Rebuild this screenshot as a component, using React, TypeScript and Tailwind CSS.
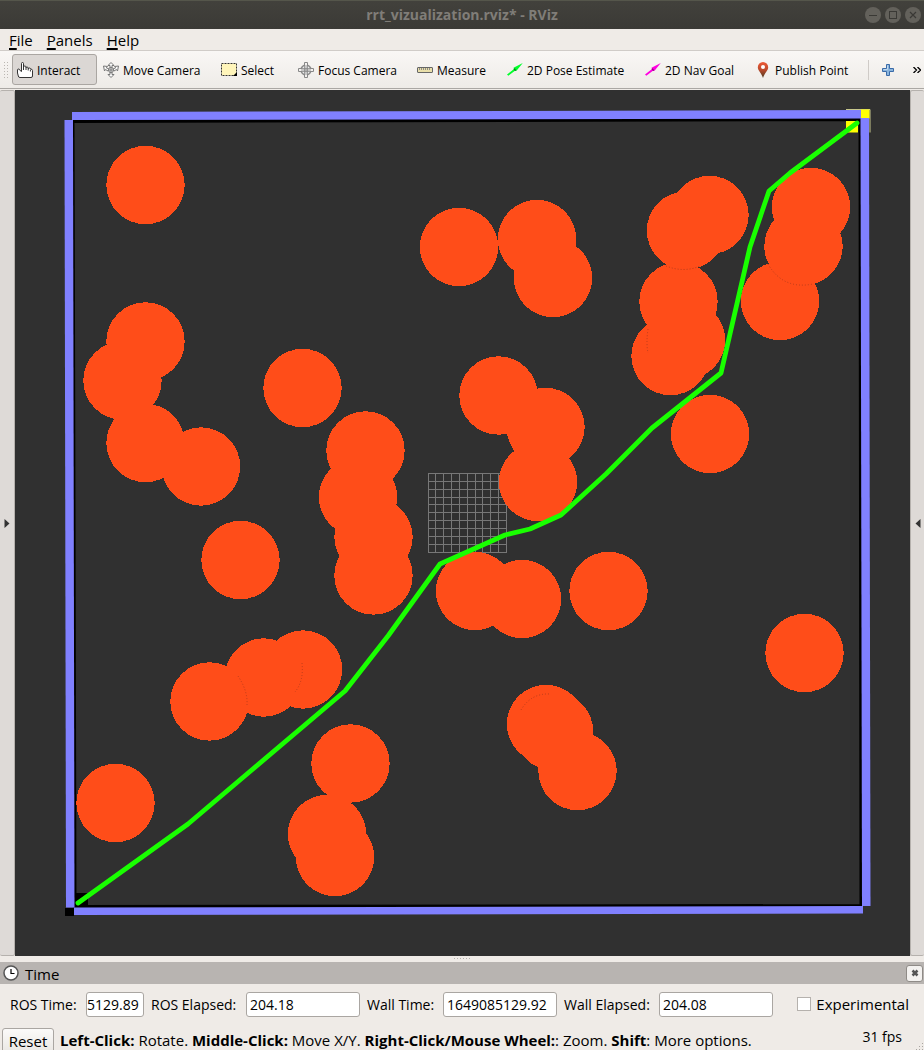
import React from 'react';

type Point = [number, number];

const OBSTACLES: Point[] = [
  [145.5, 185], [145.5, 341.5], [122.5, 380.5], [145.5, 443], [201, 466.5], [240.5, 560], [302.5, 388],
  [365.5, 450.5], [358, 497], [373.5, 537], [373.5, 575.5], [459, 247], [537, 239], [553, 278],
  [498.5, 395.5], [545.5, 427], [538, 482], [475, 591], [522, 599], [608.5, 591], [709.5, 215],
  [686, 230.5], [678.5, 301.5], [686, 340], [670.5, 356], [780, 301], [811, 207], [803.5, 246],
  [710, 434], [804.5, 653], [303, 669.5], [264, 677.5], [209.5, 701.5], [350.5, 763.5], [115.5, 803],
  [327, 834], [335, 857], [546, 724], [554, 731.5], [577.5, 771],
];

const PATH: Point[] = [
  [78, 903], [188, 824], [345, 691], [388, 636], [440, 564], [505, 535], [530, 529],
  [561, 515], [606, 474], [652, 428], [721, 373], [750, 247], [769, 191], [790, 173],
  [857, 123],
];

const GRID = Array.from({ length: 11 }, (_, i) => i);

function HandIcon() {
  return (
    <svg width="16" height="16" viewBox="0 0 16 16">
      <path d="M4.500 9.500V1.500q0-1 1-1t1 1v5V5q0-1 1.200-1T9 5v1q0-1 1-1t1.200 1v1q0-1 1.200-1t1.100 1.200V7q2 0 2 1.500v5.500q0 1.500-1.500 1.500H3q-1.500 0-1.700-1.500L.5 11V8q0-1 1-1t1 1z" fill="#fff" stroke="#333" strokeWidth="1" />
      <path d="M6.500 6v2M9 6v2M11.200 7v1.500M13.400 8v1.500" stroke="#333" strokeWidth="1" />
    </svg>
  );
}

function MoveIcon() {
  return (
    <svg width="16" height="16" viewBox="0 0 16 16" fill="#fafafa" stroke="#777" strokeWidth="1">
      <path d="M8 .5l3 3H9v2.500h-2V3.500H5zM8 15.500l3-3H9V10H7v2.500H5zM.5 4l4 .5-1.200 1.300L6 7 5 9 2.500 7.500 1.500 9zM15.500 4l-4 .5 1.200 1.300L10 7l1 2 2.500-1.500 1 1.500z" />
      <circle cx="8" cy="8" r="2.500" />
      <path d="M5.500 8h5M8 5.500v5" />
    </svg>
  );
}

function SelectIcon() {
  return (
    <svg width="16" height="16" viewBox="0 0 16 16">
      <rect x="0.500" y="1.500" width="15" height="12" fill="#fff5ba" stroke="#333" strokeDasharray="2 1" />
      <path d="M16 10v4h-4z" fill="#000" />
    </svg>
  );
}

function FocusIcon() {
  return (
    <svg width="16" height="16" viewBox="0 0 16 16" fill="none" stroke="#888">
      <circle cx="8" cy="8" r="5" fill="#eee" strokeWidth="1.500" />
      <path d="M6.500 4V.5h3V4M6.500 12v3.500h3V12M4 6.500H.5v3H4M12 6.500h3.500v3H12" fill="#f3f1ef" />
      <path d="M4 6.500h8M4 9.500h8M6.500 4v8M9.500 4v8M8 3v10M3 8h10" strokeWidth="0.800" />
    </svg>
  );
}

function MeasureIcon() {
  return (
    <svg width="16" height="16" viewBox="0 0 16 16">
      <rect x="0.500" y="5.500" width="15" height="5" rx="0.500" fill="#e9dfaa" stroke="#666" />
      <path d="M2.500 6v2M4.500 6v2M6.500 6v2M8.500 6v2M10.500 6v2M12.500 6v2" stroke="#777" strokeWidth="0.800" />
    </svg>
  );
}

function ArrowIcon({ color, dark }: { color: string; dark: string }) {
  return (
    <svg width="16" height="16" viewBox="0 0 16 16">
      <path d="M0 12.500L7 7 6.500 5.800 15.800 1 9.500 8.800 8.300 8.600 1.300 13.800z" fill={color} />
      <path d="M6.500 7l1.300-.8 1.500 2.200-1.300.6z" fill={dark} />
    </svg>
  );
}

function PinIcon() {
  return (
    <svg width="12" height="16" viewBox="0 0 12 16">
      <defs>
        <linearGradient id="pin" x1="0" y1="0" x2="0" y2="1">
          <stop offset="0" stopColor="#ef5a36" />
          <stop offset="0.500" stopColor="#b9492c" />
          <stop offset="1" stopColor="#493b20" />
        </linearGradient>
      </defs>
      <path d="M6 0a5.200 5.200 0 0 0-5.200 5.200C.8 8.500 4.500 11 6 16c1.500-5 5.200-7.500 5.200-10.800A5.200 5.200 0 0 0 6 0z" fill="url(#pin)" />
      <circle cx="6" cy="5" r="2" fill="#fff" />
    </svg>
  );
}

function PlusIcon() {
  return (
    <svg width="12" height="12" viewBox="0 0 12 12">
      <path d="M4.500.5h3v4h4v3h-4v4h-3v-4h-4v-3h4z" fill="#8ab4dc" stroke="#3a6ba8" strokeLinejoin="round" />
      <path d="M5.500 1.500v4h-4" fill="none" stroke="#bfd8ee" />
    </svg>
  );
}

const TOOLS = [
  { label: 'Interact', icon: <HandIcon />, size: 'w-[85px] mr-px border-[#aaa6a2] bg-[#dbd7d4]' },
  { label: 'Move Camera', icon: <MoveIcon />, size: 'w-[118px] border-transparent' },
  { label: 'Select', icon: <SelectIcon />, size: 'w-[77px] border-transparent' },
  { label: 'Focus Camera', icon: <FocusIcon />, size: 'w-[119px] border-transparent' },
  { label: 'Measure', icon: <MeasureIcon />, size: 'w-[90px] border-transparent' },
  { label: '2D Pose Estimate', icon: <ArrowIcon color="#00ff2a" dark="#087c1b" />, size: 'w-[138px] border-transparent' },
  { label: '2D Nav Goal', icon: <ArrowIcon color="#ff00e0" dark="#920080" />, size: 'w-[110px] border-transparent' },
  { label: 'Publish Point', icon: <PinIcon />, size: 'w-[118px] border-transparent' },
];

function TitleBar() {
  const button = 'flex size-4 items-center justify-center rounded-full bg-[#63615b] text-[#3a3935]';
  return (
    <header className="flex h-[29px] shrink-0 items-center border-t border-[#55564b] bg-linear-to-b from-[#42413c] to-[#3b3a36] pr-[3px] pl-[59px]">
      <h1 className="flex-1 text-center text-sm font-bold text-[#807d78]">rrt_vizualization.rviz* - RViz</h1>
      <div className="flex gap-1">
        <button aria-label="Minimize" className={button}>
          <svg width="16" height="16" viewBox="0 0 16 16"><path d="M4 8.500h8" stroke="currentColor" /></svg>
        </button>
        <button aria-label="Maximize" className={button}>
          <svg width="16" height="16" viewBox="0 0 16 16"><rect x="4.500" y="4.500" width="7" height="7" fill="none" stroke="currentColor" /></svg>
        </button>
        <button aria-label="Close" className={button}>
          <svg width="16" height="16" viewBox="0 0 16 16"><path d="M5 5l6 6M11 5l-6 6" stroke="currentColor" strokeWidth="1.200" /></svg>
        </button>
      </div>
    </header>
  );
}

function MenuBar() {
  return (
    <nav className="flex h-[22px] shrink-0 items-center gap-[14px] border-b border-[#d0ccc8] pl-[9px] text-[15px] leading-5">
      {['File', 'Panels', 'Help'].map((name) => (
        <button key={name}>
          <span className="underline decoration-2 underline-offset-2">{name[0]}</span>
          {name.slice(1)}
        </button>
      ))}
    </nav>
  );
}

function ToolBar() {
  return (
    <div className="flex h-[38px] shrink-0 items-center overflow-hidden border-b border-[#aaa7a3] bg-linear-to-b from-[#f9f7f5] to-[#eeebe7] pl-1 text-xs">
      <svg width="8" height="18" viewBox="0 0 8 18" className="shrink-0">
        {[1, 4, 7, 10, 13, 16].map((y) => (
          <path key={y} d={`M0 ${y}.5h1M3 ${y}.5h1`} stroke="#bbb7b2" />
        ))}
      </svg>
      {TOOLS.map((tool) => (
        <button
          key={tool.label}
          className={`flex h-[31px] shrink-0 items-center gap-1 rounded-[3px] border pl-1 whitespace-nowrap ${tool.size}`}
        >
          <span className="flex w-4 shrink-0 justify-center">{tool.icon}</span>
          <span className="pt-0.5">{tool.label}</span>
        </button>
      ))}
      <div className="h-5 w-px shrink-0 bg-[#cfcbc7]" />
      <button aria-label="Add tool" className="ml-auto shrink-0 px-2">
        <PlusIcon />
      </button>
      <button aria-label="More tools" className="mr-[3px] ml-[11px] shrink-0">
        <svg width="8" height="6" viewBox="0 0 8 6"><path d="M.5 0l3 3-3 3M4.500 0l3 3-3 3" fill="none" stroke="#000" strokeWidth="1.300" /></svg>
      </button>
    </div>
  );
}

function Scene() {
  return (
    <svg viewBox="15 90 895 866" className="block size-full" role="img" aria-label="Planned route through obstacles">
      <path d="M73 121.500L860 119.500L861 905.500L75 906.500Z" fill="none" stroke="#000" strokeWidth="3" />
      <path d="M66 908h8v8h-9v-8zM75 893h13v13H75z" fill="#000" />
      <path d="M846 109.500h24v23" fill="none" stroke="#c7c78c" />
      <path d="M861 109.500h8.500v9H861zM846 121h12v11.500h-12z" fill="#ff0" />
      <g fill="#8080ff">
        <path d="M72 112L861 110V118.500L72 120z" />
        <path d="M64.500 120H73L74.500 907.500H66z" />
        <path d="M860.500 118H869L870.500 906H862z" />
        <path d="M74 907.500L863 906V913.500L74 915z" />
      </g>
      <g stroke="#777" strokeWidth="1" shapeRendering="crispEdges">
        {GRID.map((i) => (
          <React.Fragment key={i}>
            <line x1={428 + i * 7.85} x2={428 + i * 7.85} y1="473.500" y2="552" />
            <line y1={473.5 + i * 7.85} y2={473.5 + i * 7.85} x1="428" x2="506.500" />
          </React.Fragment>
        ))}
      </g>
      <g fill="#ff4d19" shapeRendering="crispEdges">
        {OBSTACLES.map(([x, y]) => (
          <circle key={`${x}-${y}`} cx={x} cy={y} r="39.200" />
        ))}
      </g>
      <g fill="none" stroke="#a9381c" strokeDasharray="1 2" strokeWidth="0.800">
        <path d="M666 266q18 7 34 0M768 264q15 26 45 20M302 663q2 18-7 29M238 676q10 15 9 29M521 710q10-17 29-16M648 329q-2 14 0 24" />
      </g>
      <polyline points={PATH.map((p) => p.join(',')).join(' ')} fill="none" stroke="#19ff00" strokeWidth="4.800" strokeLinejoin="round" strokeLinecap="round" />
    </svg>
  );
}

function Field({ id, label, value, labelWidth, inputWidth }: { id: string; label: string; value: string; labelWidth: string; inputWidth: string }) {
  return (
    <div className="flex shrink-0 items-center">
      <label htmlFor={id} className={`whitespace-nowrap ${labelWidth}`}>{label}</label>
      <input id={id} readOnly defaultValue={value} className={`h-[25px] rounded-[3px] border border-[#aaa6a2] bg-white ${inputWidth}`} />
    </div>
  );
}

function TimePanel() {
  return (
    <section className="shrink-0">
      <div className="flex h-[22px] items-center gap-[6px] bg-[#b8b4b1] pr-px pl-[3px] text-[15px] leading-5">
        <svg width="16" height="16" viewBox="0 0 16 16">
          <circle cx="8" cy="8" r="7" fill="#fff" stroke="#555" strokeWidth="1.500" />
          <path d="M8 4v4.500h3.500" fill="none" stroke="#000" strokeWidth="1.200" />
        </svg>
        <h2 className="pt-px">Time</h2>
        <button aria-label="Close panel" className="ml-auto flex h-[17px] w-[17px] items-center justify-center rounded-[3px] border border-[#8f8b87] bg-[#f3f1ef]">
          <svg width="8" height="8" viewBox="0 0 8 8"><path d="M1.500 1.500l5 5M6.500 1.500l-5 5" stroke="#555" strokeWidth="2.500" /></svg>
        </button>
      </div>
      <div className="flex h-[41px] items-center gap-[7px] pr-[15px] pl-[10px] text-sm">
        <Field id="ros-time" label="ROS Time:" value="5129.89" labelWidth="w-[76px]" inputWidth="w-[58px]" />
        <Field id="ros-elapsed" label="ROS Elapsed:" value="204.18" labelWidth="w-[95px]" inputWidth="w-[114px] px-[3px]" />
        <Field id="wall-time" label="Wall Time:" value="1649085129.92" labelWidth="w-[76px]" inputWidth="w-[114px] px-[3px]" />
        <Field id="wall-elapsed" label="Wall Elapsed:" value="204.08" labelWidth="w-[95px]" inputWidth="w-[114px] px-[3px]" />
        <label className="ml-auto flex items-center gap-[5px] text-[15px]">
          <input type="checkbox" className="size-[14px] appearance-none border border-[#b5b1ad] bg-white" />
          Experimental
        </label>
      </div>
    </section>
  );
}

function StatusBar() {
  return (
    <footer className="flex h-[25px] shrink-0 overflow-hidden pl-0.5 text-[15px] leading-5">
      <button className="mt-[3px] h-[26px] w-[52px] shrink-0 rounded-[3px] border border-[#aaa6a2] bg-linear-to-b from-[#fbfaf9] to-[#eae7e3]">Reset</button>
      <p className="ml-1.5 pt-[5px] whitespace-nowrap">
        <b>Left-Click:</b> Rotate. <b>Middle-Click:</b> Move X/Y. <b>Right-Click/Mouse Wheel:</b>: Zoom. <b>Shift</b>: More options.
      </p>
      <span className="ml-auto pt-0.5 text-sm">31 fps</span>
      <svg width="22" height="25" viewBox="0 0 22 25" className="shrink-0">
        <path d="M20 18.500h1M17 21.500h1M20 21.500h1M14 24.500h1M17 24.500h1M20 24.500h1" stroke="#aaa6a2" />
      </svg>
    </footer>
  );
}

export default function App() {
  const side = 'flex shrink-0 items-center justify-center rounded-[2px] border-[#b5b1ad] bg-[#dedad7]';
  return (
    <div className="flex h-screen flex-col overflow-hidden bg-[#efebe7] font-['Open_Sans','Noto_Sans',sans-serif] text-black">
      <TitleBar />
      <MenuBar />
      <ToolBar />
      <main className="mt-px flex min-h-0 flex-1">
        <button aria-label="Show left panel" className={`${side} w-[15px] border-y border-r`}>
          <svg width="6" height="9" viewBox="0 0 6 9"><path d="M.5 0L5.500 4.500.5 9z" fill="#333" /></svg>
        </button>
        <div className="min-w-0 flex-1 bg-[#303030]">
          <Scene />
        </div>
        <button aria-label="Show right panel" className={`${side} w-[14px] border-y border-l`}>
          <svg width="6" height="9" viewBox="0 0 6 9"><path d="M5.500 0L.5 4.500 5.500 9z" fill="#333" /></svg>
        </button>
      </main>
      <div className="flex h-1.5 shrink-0 justify-center">
        <svg width="18" height="4" viewBox="0 0 18 4"><path d="M1 2.500h17" stroke="#b5b1ad" strokeDasharray="1 2" /></svg>
      </div>
      <TimePanel />
      <StatusBar />
    </div>
  );
}
